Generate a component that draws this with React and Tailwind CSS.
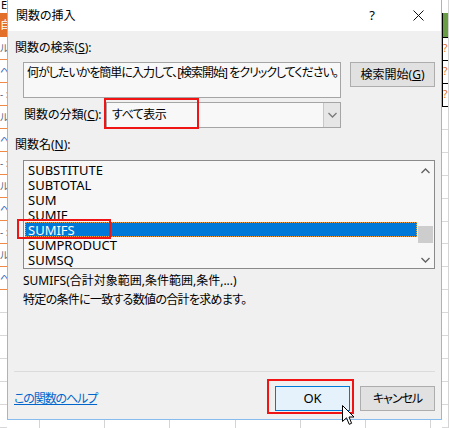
import React from 'react'

const functions = ['SUBSTITUTE', 'SUBTOTAL', 'SUM', 'SUMIF', 'SUMIFS', 'SUMPRODUCT', 'SUMSQ']

function Chevron({ up, className }) {
  return (
    <svg width="9" height="6" viewBox="0 0 9 6" className={className}>
      <path
        d={up ? 'M0.5 5 L4.5 1 L8.5 5' : 'M0.5 1 L4.5 5 L8.5 1'}
        fill="none"
        stroke="currentColor"
        strokeWidth="1.3"
      />
    </svg>
  )
}

function LeftStrip() {
  const rows = Array.from({ length: 17 })
  return (
    <div className="w-[7px] shrink-0 flex flex-col bg-white overflow-hidden">
      <div className="h-[13px] text-[11px] leading-[10px] text-black pl-[1px]">E</div>
      <div className="h-[24px] bg-[#e2702a] text-white text-[11px] leading-[24px] whitespace-nowrap">自</div>
      {rows.map((_, i) => (
        <div
          key={i}
          className={`h-[23px] border-b whitespace-nowrap text-[10px] leading-[22px] ${
            i < 11 ? 'border-[#ee8a45]' : 'border-[#d8d8d8]'
          }`}
        >
          {i < 11 && (
            <span className={i % 3 === 1 ? 'text-[#3a6fc4]' : 'text-[#5b6a80]'}>
              {i % 3 === 1 ? 'ヘ/' : i % 3 === 2 ? '- :' : 'ル'}
            </span>
          )}
        </div>
      ))}
    </div>
  )
}

function RightStrip() {
  const rows = Array.from({ length: 14 })
  return (
    <div className="w-[7px] shrink-0 flex flex-col bg-white overflow-hidden border-r border-[#d4d4d4]">
      <div className="h-[13px]" />
      <div className="h-[24px] bg-[#6a9c45] border-l border-black" />
      {[0, 1, 2].map((i) => (
        <div key={i} className="h-[23px] border-l border-t border-black text-[10px] leading-[20px]">
          <span className="text-[#e06a20]">?</span>
        </div>
      ))}
      <div className="border-t border-black" />
      {rows.map((_, i) => (
        <div key={i} className="h-[23px] border-b border-[#d8d8d8]" />
      ))}
    </div>
  )
}

function BottomGrid() {
  return (
    <div className="flex h-[8px] bg-white">
      <div className="w-[33px] border-r border-[#d4d4d4]" />
      <div className="w-[65px] border-r border-[#d4d4d4]" />
      <div className="w-[65px] border-r border-[#d4d4d4]" />
      <div className="w-[66px] border-r border-[#d4d4d4]" />
      <div className="w-[65px] border-r border-[#d4d4d4]" />
      <div className="w-[65px] border-r border-[#d4d4d4]" />
      <div className="w-[65px] border-r border-[#d4d4d4]" />
    </div>
  )
}

function Dialog() {
  return (
    <div className="h-[420px] flex flex-col border-x border-b border-[#86bcee] text-[12px] text-black">
      {/* Title bar */}
      <div className="h-[31px] bg-white flex items-center">
        <div className="pl-[8px] flex-1">関数の挿入</div>
        <div className="w-[46px] h-full flex items-center justify-center text-[13px]">?</div>
        <div className="w-[46px] h-full flex items-center justify-center">
          <svg width="11" height="11" viewBox="0 0 11 11">
            <path d="M0.5 0.5 L10.5 10.5 M10.5 0.5 L0.5 10.5" stroke="#111" strokeWidth="1" />
          </svg>
        </div>
      </div>

      {/* Body */}
      <div className="flex-1 bg-[#f0f0f0] pl-[6px] pr-[6px] flex flex-col">
        <div className="mt-[9px] ml-[1px] leading-[16px]">
          関数の検索(<span className="underline">S</span>):
        </div>

        <div className="flex items-start mt-[6px] ml-[9px] gap-[9px]">
          <div className="w-[318px] h-[36px] border border-[#a5a5a5] bg-[#f8f8f8] px-[3px] pt-[2px] leading-[16px] whitespace-nowrap tracking-[-1px]">
            何がしたいかを簡単に入力して、[検索開始] をクリックしてください。
          </div>
          <button className="w-[85px] h-[25px] border border-[#adadad] bg-[#e1e1e1] leading-[16px] text-center">
            検索開始(<span className="underline">G</span>)
          </button>
        </div>

        <div className="flex items-center mt-[4px]">
          <div className="ml-[10px] w-[82px] leading-[16px] whitespace-nowrap">
            関数の分類(<span className="underline">C</span>):
          </div>
          <div className="relative w-[235px] h-[26px] border border-[#a5a5a5] bg-[#f8f8f8] flex">
            <div className="flex-1 pl-[5px] leading-[24px] tracking-[-0.5px]">すべて表示</div>
            <div className="w-[17px] bg-[#e6e6e6] border-l border-[#c8c8c8] flex items-center justify-center text-[#7a7a7a]">
              <Chevron />
            </div>
            <div className="absolute left-[-3px] top-[-5px] w-[95px] h-[31px] border-2 border-[#f01414]" />
          </div>
        </div>

        <div className="mt-[9px] ml-[1px] leading-[16px]">
          関数名(<span className="underline">N</span>):
        </div>

        {/* List box */}
        <div className="relative mt-[7px] ml-[9px] w-[412px] h-[109px] border border-[#8a8a8a] bg-[#f7f7f7] flex">
          <div className="flex-1 pt-[1px] pl-[1px]">
            {functions.map((name) => (
              <div
                key={name}
                className={`h-[15px] pl-[2px] text-[13px] leading-[15px] font-['Noto_Sans',sans-serif] ${
                  name === 'SUMIFS'
                    ? 'bg-[#0078d7] text-white border border-dotted border-[#f0a040]'
                    : 'border border-transparent'
                }`}
              >
                {name}
              </div>
            ))}
          </div>
          <div className="w-[17px] flex flex-col text-[#606060]">
            <div className="h-[19px] flex items-center justify-center">
              <Chevron up />
            </div>
            <div className="h-[46px]" />
            <div className="h-[17px] mx-[1px] bg-[#cdcdcd]" />
            <div className="h-[8px]" />
            <div className="flex-1 flex items-center justify-center">
              <Chevron />
            </div>
          </div>
          <div className="absolute left-[-7px] top-[58px] w-[94px] h-[20px] border-2 border-[#f01414]" />
        </div>

        <div className="mt-[2px] ml-[9px] leading-[19px]">
          <div>SUMIFS(合計対象範囲,条件範囲,条件,...)</div>
          <div className="tracking-[-0.7px]">特定の条件に一致する数値の合計を求めます。</div>
        </div>

        <div className="flex-1" />
        <div className="h-px bg-[#dcdcdc]" />

        {/* Footer */}
        <div className="flex items-center mt-[14px] mb-[8px]">
          <a className="flex-1 text-[#0066cc] underline leading-[16px] cursor-pointer tracking-[-1.1px]">この関数のヘルプ</a>
          <div className="relative">
            <button className="w-[75px] h-[25px] border border-[#0078d7] bg-[#e5f1fb] text-[13px] font-['Noto_Sans',sans-serif]">
              OK
            </button>
            <div className="absolute left-[-8px] top-[-7px] w-[87px] h-[35px] border-2 border-[#f01414]" />
          </div>
          <button className="ml-[10px] w-[75px] h-[25px] border border-[#adadad] bg-[#e1e1e1] tracking-[-1px]">
            キャンセル
          </button>
        </div>
      </div>
    </div>
  )
}

export default function App() {
  return (
    <div className="relative w-[449px] h-[428px] overflow-hidden bg-white font-['Noto_Sans','Noto_Sans_CJK_JP',sans-serif] [font-feature-settings:'palt']">
      <div className="flex h-full">
        <LeftStrip />
        <div className="w-[435px] shrink-0 flex flex-col">
          <Dialog />
          <BottomGrid />
        </div>
        <RightStrip />
      </div>

      {/* Mouse pointer */}
      <svg
        width="13"
        height="21"
        viewBox="0 0 13 21"
        className="absolute left-[342px] top-[405px]"
      >
        <path
          d="M0.5 0.5 L0.5 16.5 L4.5 12.8 L7.2 19.3 L9.6 18.3 L7 12 L12 12 Z"
          fill="white"
          stroke="black"
          strokeWidth="1"
          strokeLinejoin="round"
        />
      </svg>
    </div>
  )
}
